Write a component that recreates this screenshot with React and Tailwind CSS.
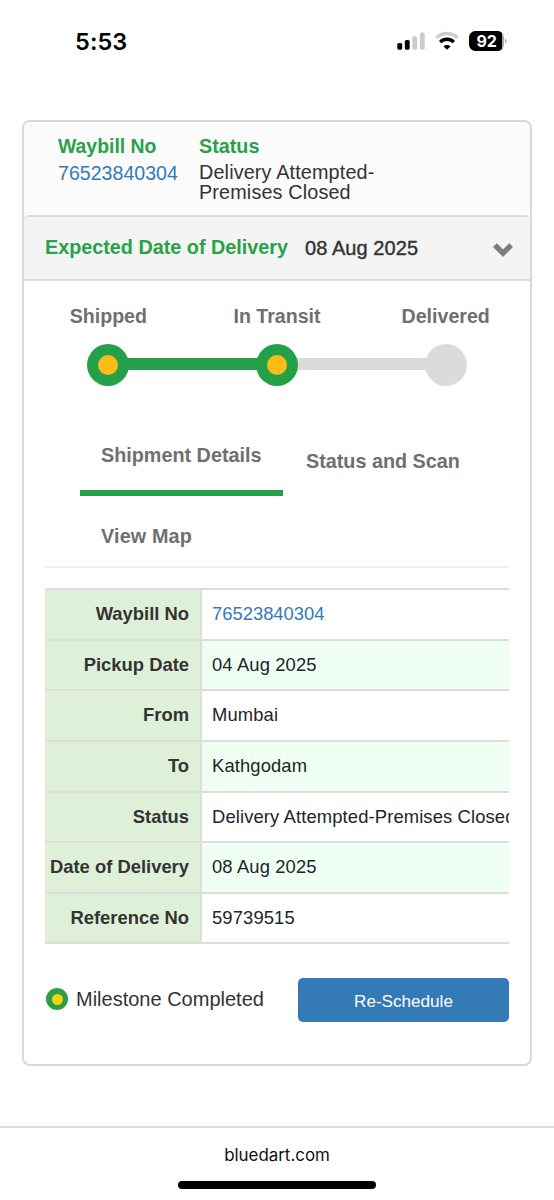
import clsx from "clsx";

const steps = [
  { label: "Shipped", done: true },
  { label: "In Transit", done: true },
  { label: "Delivered", done: false },
];

const details = [
  { label: "Waybill No", value: "76523840304", link: true },
  { label: "Pickup Date", value: "04 Aug 2025" },
  { label: "From", value: "Mumbai" },
  { label: "To", value: "Kathgodam" },
  { label: "Status", value: "Delivery Attempted-Premises Closed" },
  { label: "Date of Delivery", value: "08 Aug 2025" },
  { label: "Reference No", value: "59739515" },
];

const StatusBar = () => (
  <div className="flex h-[120px] items-start justify-between pt-[27px] pr-[46px] pl-[75px] font-['Inter',sans-serif]">
    <span className="text-[23.5px] leading-[29px] font-semibold tracking-[0.1px] text-black">5:53</span>
    <div className="flex h-[28px] items-center">
      <svg width="28" height="20" viewBox="0 0 28 20" className="mr-[10px]">
        <rect x="0.3" y="12" width="4.9" height="6.7" rx="1.6" fill="#000" />
        <rect x="7.8" y="9" width="4.9" height="9.7" rx="1.6" fill="#000" />
        <rect x="15.3" y="5.3" width="4.9" height="13.4" rx="1.6" fill="#cccccc" />
        <rect x="22.9" y="1.5" width="4.9" height="17.2" rx="1.6" fill="#cccccc" />
      </svg>
      <svg width="24" height="20" viewBox="0 0 24 20" className="mr-[10px]" fill="none">
        <path d="M1.4 6.9a15 15 0 0 1 21.2 0" stroke="#cccccc" strokeWidth="3.4" />
        <path d="M5.2 11.1a9.7 9.7 0 0 1 13.6 0" stroke="#000" strokeWidth="3.4" />
        <path d="M12 18.8l-3.5-3.3a5 5 0 0 1 7 0z" fill="#000" />
      </svg>
      <div className="flex h-5 w-[35px] overflow-hidden rounded-[6.5px] bg-[#a9a9a9]">
        <div className="flex w-[33px] items-center justify-center bg-black pl-[2px] text-[16px] leading-5 font-bold tracking-[-0.3px] text-white">
          92
        </div>
      </div>
      <svg width="3" height="6" viewBox="0 0 3 6" className="ml-px">
        <path d="M0 0.5a2.7 2.7 0 0 1 0 5z" fill="#a9a9a9" />
      </svg>
    </div>
  </div>
);

const Summary = () => (
  <div className="flex h-[93px] rounded-t-[6px] bg-[#fbfbfb] pt-[11px] pl-[34px]">
    <div className="w-[141px]">
      <div className="text-[19.4px] leading-[26px] font-bold text-[#28a149]">Waybill No</div>
      <a className="block text-[19.6px] leading-[28px] text-[#337ab7]">76523840304</a>
    </div>
    <div className="w-[200px]">
      <div className="text-[19.8px] leading-[26px] font-bold text-[#28a149]">Status</div>
      <p className="mt-[4px] text-[19.8px] leading-[19.8px] tracking-[0.15px]">
        Delivery Attempted-Premises Closed
      </p>
    </div>
  </div>
);

const ExpectedDate = () => (
  <div className="flex h-[66px] items-center rounded-t-[5px] border-t-2 border-b-2 border-[#dddddd] bg-[#f4f4f4] pr-[17px] pl-[21px]">
    <span className="text-[19.8px] font-bold text-[#28a149]">Expected Date of Delivery</span>
    <span className="mt-[-1px] ml-[17px] text-[20px] tracking-[0.08px] [-webkit-text-stroke:0.4px_#333333]">
      08 Aug 2025
    </span>
    <svg width="20" height="14" viewBox="0 0 20 14" className="mt-[3px] ml-auto">
      <path d="M1.9 2.1L10 10.1l8.1-8" fill="none" stroke="#7c7c7c" strokeWidth="5.4" />
    </svg>
  </div>
);

const Stepper = () => (
  <div className="relative flex justify-center pt-[22px]">
    <div className="absolute top-[77px] left-[84px] flex h-3 w-[338px]">
      <div className="w-1/2 bg-[#24a148]" />
      <div className="w-1/2 bg-[#dcdadb]" />
    </div>
    {steps.map((step) => (
      <div key={step.label} className="relative flex w-[168.7px] flex-col items-center">
        <span className="text-[19.6px] leading-[26px] font-bold text-[#706f6f]">{step.label}</span>
        <div
          className={clsx(
            "mt-[15px] flex size-[42px] items-center justify-center rounded-full",
            step.done ? "bg-[#24a148]" : "bg-[#dcdadb]"
          )}
        >
          {step.done && <div className="size-5 rounded-full bg-[#fdbc19]" />}
        </div>
      </div>
    ))}
  </div>
);

const Tabs = () => (
  <div className="mx-[21px] mt-[45px] border-b-2 border-[#f0f0f0] pl-[35px] text-[19.8px] font-bold text-[#706f6f]">
    <div className="flex h-[78px] items-start">
      <div className="h-[65px] w-[203px] border-b-[6px] border-[#24a148] pt-[11px] pl-[21px] leading-[26px]">
        Shipment Details
      </div>
      <div className="pt-[17px] pl-[23px] leading-[26px]">Status and Scan</div>
    </div>
    <div className="h-[57px] pt-[14px] pl-[21px] leading-[26px] tracking-[0.15px]">View Map</div>
  </div>
);

const DetailsTable = () => (
  <div className="mx-[21px] mt-[20px] overflow-hidden border-t-2 border-[#dddddd] text-[18.4px]">
    {details.map((row, i) => (
      <div key={row.label} className="flex h-[50.65px] border-b-2 border-[#dddddd] leading-[48px]">
        <div className="w-[157px] shrink-0 border-r-2 border-[#dddddd] bg-[#dff0d8] pr-[11px] text-right text-[18.4px] font-bold whitespace-nowrap">
          {row.label}
        </div>
        <div
          className={clsx(
            "min-w-0 flex-1 pl-[10px] whitespace-nowrap",
            i % 2 === 1 && "bg-[#f0fff4]",
            row.link ? "text-[#337ab7]" : "tracking-[0.12px] text-[#212529]"
          )}
        >
          {row.value}
        </div>
      </div>
    ))}
  </div>
);

const App = () => {
  return (
    <div className="flex h-[1200px] w-[554px] flex-col overflow-hidden bg-white font-['Liberation_Sans',Arial,sans-serif] text-[#333333]">
      <StatusBar />

      <div className="mr-[22px] ml-[22px] h-[946px] rounded-[8px] border-2 border-[#d9d9d9] bg-white">
        <Summary />
        <ExpectedDate />
        <Stepper />
        <Tabs />
        <DetailsTable />

        {/* Legend and action */}
        <div className="mt-[34px] flex items-center pr-[21px] pl-[22px]">
          <div className="mt-[-2px] flex size-[22px] items-center justify-center rounded-full bg-[#2a9f47]">
            <div className="size-[11px] rounded-full bg-[#f1d40e]" />
          </div>
          <span className="mt-[-3px] ml-[8px] text-[20px]">Milestone Completed</span>
          <button className="ml-auto h-[44px] w-[211px] rounded-[5px] bg-[#337ab7] pt-[2px] text-[17.1px] text-white">
            Re-Schedule
          </button>
        </div>
      </div>

      {/* Browser address bar */}
      <div className="mt-[60px] flex flex-1 flex-col items-center border-t-2 border-[#dddddd] font-['Inter',sans-serif]">
        <span className="mt-[14px] text-[16.9px] leading-[26px] text-[#111111]">bluedart.com</span>
        <div className="mt-[13px] h-2 w-[198px] rounded-full bg-black" />
      </div>
    </div>
  );
};

export default App;
